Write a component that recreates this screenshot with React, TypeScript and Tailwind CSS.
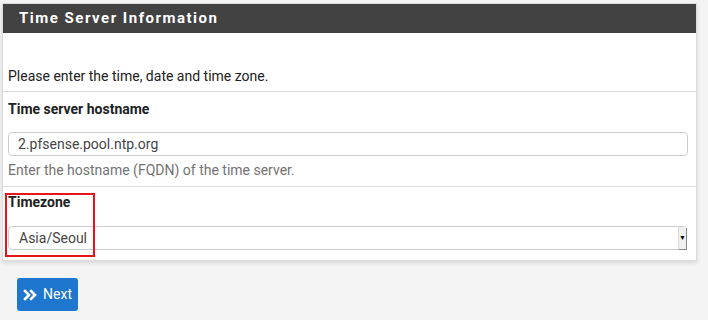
import React from 'react';

const App: React.FC = () => {
    return (
        <div className="w-[708px] h-[320px] bg-[#f4f4f4] pt-[3px] font-['Roboto',sans-serif] text-[14px] text-[#212121] overflow-hidden">
            <div className="ml-[2px] w-[695px] bg-white border border-[#dcdcdc] shadow-[0_2px_4px_rgba(0,0,0,0.12)]">
                <div className="h-[29px] bg-[#424242] flex items-center pl-[16px]">
                    <h2 className="text-white font-bold text-[15px] tracking-[1.5px]">Time Server Information</h2>
                </div>
                <div className="h-[59px] flex items-end pb-[4px] pl-[5px] border-b border-[#dddddd]">
                    <span>Please enter the time, date and time zone.</span>
                </div>
                <div className="px-[5px] pt-[7px] pb-[5px] border-b border-[#dddddd]">
                    <label className="block font-bold">Time server hostname</label>
                    <div className="mt-[12px] h-[24px] mr-[3px] border border-[#cccccc] rounded-[4px] flex items-center pl-[9px] text-[#444]">
                        2.pfsense.pool.ntp.org
                    </div>
                    <p className="mt-[4px] text-[#737373]">Enter the hostname (FQDN) of the time server.</p>
                </div>
                <div className="relative px-[5px] pt-[5px] pb-[10px]">
                    <div className="absolute left-[2px] top-[6px] w-[90px] h-[64px] border-2 border-[#e8141b]" />
                    <label className="block font-bold">Timezone</label>
                    <div className="mt-[13px] h-[24px] mr-[4px] border border-[#cccccc] rounded-[4px] flex items-center pl-[10px] text-[#444]">
                        <span className="flex-1">Asia/Seoul</span>
                        <span className="w-[8px] h-[22px] bg-[#f0f0f0] border-l border-[#dddddd] shadow-[1px_1px_0_#888] flex items-center justify-center text-[7px] text-black">▼</span>
                    </div>
                </div>
            </div>
            <div className="pl-[17px] pt-[17px]">
                <button className="h-[33px] w-[61px] bg-[#1e76cf] rounded-[3px] text-white flex items-center justify-center gap-[6px] text-[14px]">
                    <svg width="14" height="12" viewBox="0 0 14 12" fill="none" stroke="white" strokeWidth="2.6" strokeLinecap="square">
                        <path d="M2 2l4 4-4 4M8 2l4 4-4 4" />
                    </svg>
                    Next
                </button>
            </div>
        </div>
    );
};

export default App;
